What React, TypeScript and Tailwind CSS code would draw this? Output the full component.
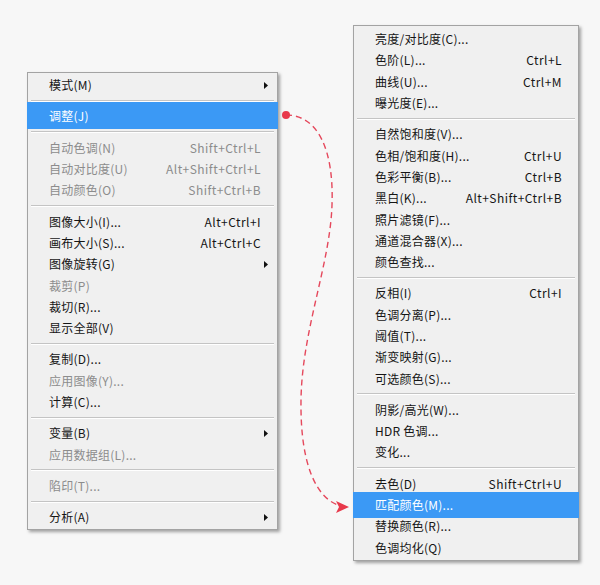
type Row =
  | "sep"
  | {
      label: string;
      shortcut?: string;
      sub?: boolean;
      disabled?: boolean;
      active?: boolean;
    };

const LEFT: Row[] = [
  { label: "模式(M)", sub: true },
  "sep",
  { label: "调整(J)", active: true },
  "sep",
  { label: "自动色调(N)", shortcut: "Shift+Ctrl+L", disabled: true },
  { label: "自动对比度(U)", shortcut: "Alt+Shift+Ctrl+L", disabled: true },
  { label: "自动颜色(O)", shortcut: "Shift+Ctrl+B", disabled: true },
  "sep",
  { label: "图像大小(I)...", shortcut: "Alt+Ctrl+I" },
  { label: "画布大小(S)...", shortcut: "Alt+Ctrl+C" },
  { label: "图像旋转(G)", sub: true },
  { label: "裁剪(P)", disabled: true },
  { label: "裁切(R)..." },
  { label: "显示全部(V)" },
  "sep",
  { label: "复制(D)..." },
  { label: "应用图像(Y)...", disabled: true },
  { label: "计算(C)..." },
  "sep",
  { label: "变量(B)", sub: true },
  { label: "应用数据组(L)...", disabled: true },
  "sep",
  { label: "陷印(T)...", disabled: true },
  "sep",
  { label: "分析(A)", sub: true },
];

const RIGHT: Row[] = [
  { label: "亮度/对比度(C)..." },
  { label: "色阶(L)...", shortcut: "Ctrl+L" },
  { label: "曲线(U)...", shortcut: "Ctrl+M" },
  { label: "曝光度(E)..." },
  "sep",
  { label: "自然饱和度(V)..." },
  { label: "色相/饱和度(H)...", shortcut: "Ctrl+U" },
  { label: "色彩平衡(B)...", shortcut: "Ctrl+B" },
  { label: "黑白(K)...", shortcut: "Alt+Shift+Ctrl+B" },
  { label: "照片滤镜(F)..." },
  { label: "通道混合器(X)..." },
  { label: "颜色查找..." },
  "sep",
  { label: "反相(I)", shortcut: "Ctrl+I" },
  { label: "色调分离(P)..." },
  { label: "阈值(T)..." },
  { label: "渐变映射(G)..." },
  { label: "可选颜色(S)..." },
  "sep",
  { label: "阴影/高光(W)..." },
  { label: "HDR 色调..." },
  { label: "变化..." },
  "sep",
  { label: "去色(D)", shortcut: "Shift+Ctrl+U" },
  { label: "匹配颜色(M)...", active: true },
  { label: "替换颜色(R)..." },
  { label: "色调均化(Q)" },
];

function SubArrow() {
  return (
    <svg width="4" height="7" viewBox="0 0 4 7" className="shrink-0">
      <path d="M0 0 L4 3.5 L0 7 Z" fill="#111" />
    </svg>
  );
}

function Menu({ rows, tall }: { rows: Row[]; tall?: boolean }) {
  return (
    <div className="flex flex-col">
      {rows.map((r, i) => {
        if (r === "sep") {
          return (
            <div key={i} className="h-[10px] flex flex-col justify-center px-[3px]">
              <div className="h-px bg-[#c4c4c4]" />
              <div className="h-px bg-white" />
            </div>
          );
        }
        return (
          <div
            key={i}
            className={`relative h-[21.3px] flex items-center justify-between pl-[21px] ${
              r.sub ? "pr-[9px]" : "pr-[16px]"
            }`}
          >
            {r.active && (
              <div
                className={`absolute -left-px -right-px bg-[#3b99f5] ${
                  tall ? "-top-[4px] -bottom-[2px]" : "-top-[2px] -bottom-[2px]"
                }`}
              />
            )}
            <span
              className={`relative whitespace-nowrap tracking-[0.25px] ${
                r.active ? "text-white" : r.disabled ? "text-[#8c8c8c]" : "text-[#151515]"
              }`}
            >
              {r.label}
            </span>
            {r.shortcut && (
              <span
                className={`relative whitespace-nowrap tracking-[0.45px] ${
                  r.disabled ? "text-[#8c8c8c]" : "text-[#151515]"
                }`}
              >
                {r.shortcut}
              </span>
            )}
            {r.sub && <SubArrow />}
          </div>
        );
      })}
    </div>
  );
}

export default function App() {
  return (
    <div
      className="relative w-[600px] h-[585px] bg-[#f7f7f7] flex items-start pl-[27px] pt-[25px] text-[12px] leading-none"
      style={{ fontFamily: '"Noto Sans CJK SC", "Noto Sans", sans-serif' }}
    >
      {/* ── Image menu ── */}
      <div className="mt-[47px] w-[251px] bg-[#f0f0f0] border border-[#a3a3a3] pt-[1.5px] pb-[1px] shadow-[2px_2px_3px_rgba(0,0,0,0.35)]">
        <Menu rows={LEFT} tall />
      </div>

      {/* ── Adjustments submenu ── */}
      <div className="ml-[75px] w-[226px] bg-[#f0f0f0] border border-[#a3a3a3] pt-[2.5px] pb-[1.5px] shadow-[2px_2px_3px_rgba(0,0,0,0.35)]">
        <Menu rows={RIGHT} />
      </div>

      {/* ── Connector arrow ── */}
      <svg
        className="absolute inset-0 pointer-events-none"
        width="600"
        height="585"
        viewBox="0 0 600 585"
      >
        <path
          d="M286 115 C 318 115, 334 150, 332 205 C 330 265, 302 330, 301 400 C 300 468, 318 500, 341 506"
          fill="none"
          stroke="#e5485c"
          strokeWidth="1.4"
          strokeDasharray="6 4"
        />
        <circle cx="286" cy="115" r="4" fill="#e8394b" />
        <path d="M349 507 L336 501 L339 507 L336 513 Z" fill="#e8394b" />
      </svg>
    </div>
  );
}
